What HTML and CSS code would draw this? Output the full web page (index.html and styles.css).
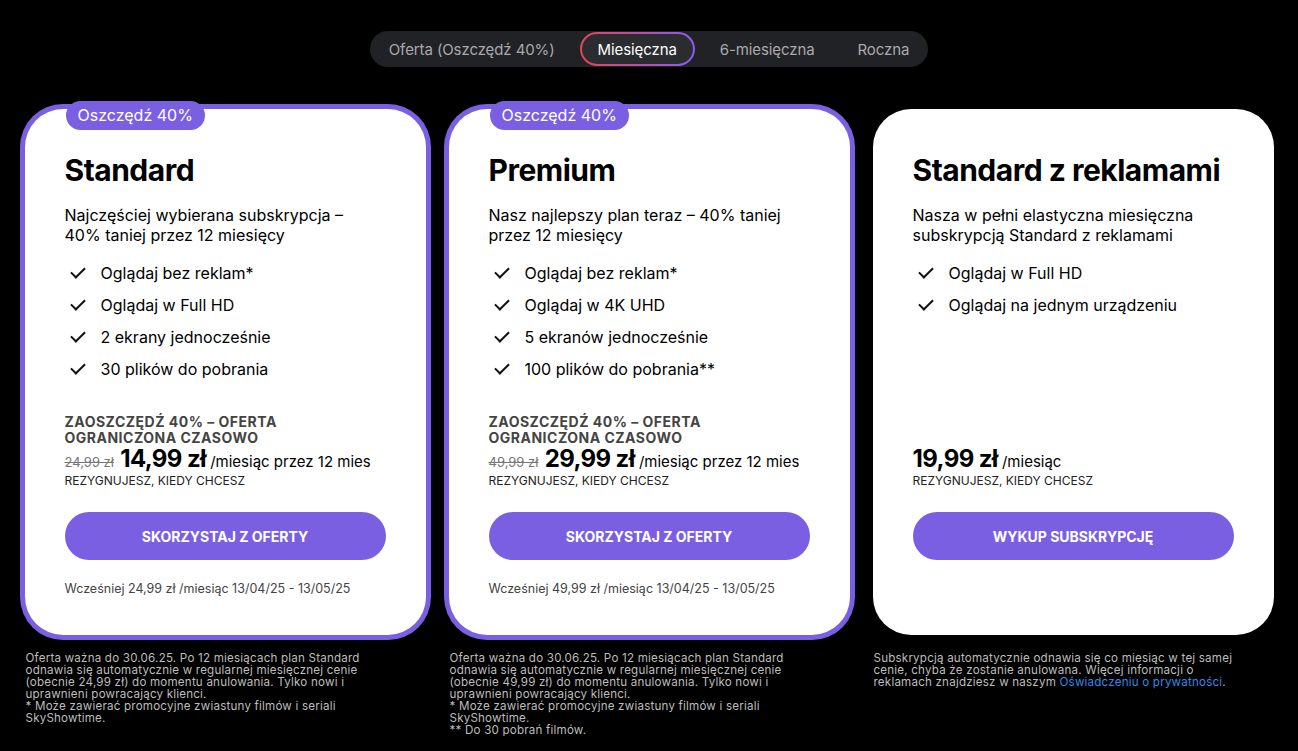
FILE: index.html
```html
<!DOCTYPE html>
<html lang="pl">

<head>
    <meta charset="UTF-8">
    <meta name="viewport" content="width=device-width, initial-scale=1.0">
    <title>Plany SkyShowtime</title>
    <link rel="stylesheet" href="styles.css">
</head>

<body>
    <nav class="tabs">
        <a class="tab">Oferta (Oszczędź 40%)</a>
        <a class="tab active">Miesięczna</a>
        <a class="tab">6-miesięczna</a>
        <a class="tab">Roczna</a>
    </nav>

    <main class="plans">
        <section class="column">
            <article class="plan plan-offer">
                <span class="badge">Oszczędź 40%</span>
                <h2>Standard</h2>
                <p class="desc">Najczęściej wybierana subskrypcja – 40% taniej przez 12 miesięcy</p>
                <ul class="features">
                    <li>Oglądaj bez reklam*</li>
                    <li>Oglądaj w Full HD</li>
                    <li>2 ekrany jednocześnie</li>
                    <li>30 plików do pobrania</li>
                </ul>
                <div class="pricing">
                    <p class="promo">ZAOSZCZĘDŹ 40% – OFERTA OGRANICZONA CZASOWO</p>
                    <p class="price"><s>24,99 zł</s> <strong>14,99 zł</strong> /miesiąc przez 12 mies</p>
                    <p class="cancel">REZYGNUJESZ, KIEDY CHCESZ</p>
                </div>
                <a class="cta">SKORZYSTAJ Z OFERTY</a>
                <p class="earlier">Wcześniej 24,99 zł /miesiąc 13/04/25 - 13/05/25</p>
            </article>
            <p class="note">Oferta ważna do 30.06.25. Po 12 miesiącach plan Standard<br>
                odnawia się automatycznie w regularnej miesięcznej cenie<br>
                (obecnie 24,99 zł) do momentu anulowania. Tylko nowi i<br>
                uprawnieni powracający klienci.<br>
                * Może zawierać promocyjne zwiastuny filmów i seriali<br>
                SkyShowtime.</p>
        </section>

        <section class="column">
            <article class="plan plan-offer">
                <span class="badge">Oszczędź 40%</span>
                <h2>Premium</h2>
                <p class="desc">Nasz najlepszy plan teraz – 40% taniej przez 12 miesięcy</p>
                <ul class="features">
                    <li>Oglądaj bez reklam*</li>
                    <li>Oglądaj w 4K UHD</li>
                    <li>5 ekranów jednocześnie</li>
                    <li>100 plików do pobrania**</li>
                </ul>
                <div class="pricing">
                    <p class="promo">ZAOSZCZĘDŹ 40% – OFERTA OGRANICZONA CZASOWO</p>
                    <p class="price"><s>49,99 zł</s> <strong>29,99 zł</strong> /miesiąc przez 12 mies</p>
                    <p class="cancel">REZYGNUJESZ, KIEDY CHCESZ</p>
                </div>
                <a class="cta">SKORZYSTAJ Z OFERTY</a>
                <p class="earlier">Wcześniej 49,99 zł /miesiąc 13/04/25 - 13/05/25</p>
            </article>
            <p class="note">Oferta ważna do 30.06.25. Po 12 miesiącach plan Standard<br>
                odnawia się automatycznie w regularnej miesięcznej cenie<br>
                (obecnie 49,99 zł) do momentu anulowania. Tylko nowi i<br>
                uprawnieni powracający klienci.<br>
                * Może zawierać promocyjne zwiastuny filmów i seriali<br>
                SkyShowtime.<br>
                ** Do 30 pobrań filmów.</p>
        </section>

        <section class="column">
            <article class="plan">
                <h2>Standard z reklamami</h2>
                <p class="desc">Nasza w pełni elastyczna miesięczna subskrypcją Standard z reklamami</p>
                <ul class="features">
                    <li>Oglądaj w Full HD</li>
                    <li>Oglądaj na jednym urządzeniu</li>
                </ul>
                <div class="pricing">
                    <p class="price"><strong>19,99 zł</strong> /miesiąc</p>
                    <p class="cancel">REZYGNUJESZ, KIEDY CHCESZ</p>
                </div>
                <a class="cta">WYKUP SUBSKRYPCJĘ</a>
                <p class="earlier">&nbsp;</p>
            </article>
            <p class="note">Subskrypcją automatycznie odnawia się co miesiąc w tej samej<br>
                cenie, chyba że zostanie anulowana. Więcej informacji o<br>
                reklamach znajdziesz w naszym <a href="#">Oświadczeniu o prywatności</a>.</p>
        </section>
    </main>
</body>

</html>
```

FILE: styles.css
```css
body {
    font-family: 'Inter', 'Noto Sans', sans-serif;
    margin: 0;
    padding: 31px 0 0;
    background-color: #000;
    color: #000;
}

p {
    margin: 0;
}

/* plan period switcher */
.tabs {
    display: flex;
    gap: 7px;
    width: max-content;
    margin: 0 auto;
    padding: 1px;
    background-color: #212225;
    border-radius: 18px;
}

.tab {
    display: flex;
    align-items: center;
    height: 34px;
    padding: 0 16px;
    box-sizing: border-box;
    color: #a9a9ad;
    font-size: 15px;
    letter-spacing: -0.1px;
    border-radius: 17px;
    border: 2px solid transparent;
}

.tab.active {
    color: #fff;
    background: linear-gradient(#2b2c30, #2b2c30) padding-box,
        linear-gradient(90deg, #e5455a, #8a5cf2) border-box;
}

/* cards */
.plans {
    display: grid;
    grid-template-columns: repeat(3, 401px);
    gap: 23px;
    justify-content: center;
    margin-top: 42px;
}

.plan {
    position: relative;
    display: flex;
    flex-direction: column;
    height: 526px;
    box-sizing: border-box;
    padding: 43px 40px 37px;
    background-color: #fff;
    border-radius: 38px;
}

.plan-offer {
    box-shadow: 0 0 0 5px #7b5fe2;
}

.badge {
    position: absolute;
    top: -8px;
    left: 41px;
    padding: 0 12px;
    height: 29px;
    line-height: 29px;
    background-color: #7b5fe2;
    color: #fff;
    font-size: 16px;
    border-radius: 15px;
}

.plan h2 {
    margin: 0;
    font-size: 30px;
    line-height: 36px;
    font-weight: 700;
    letter-spacing: -0.5px;
}

.desc {
    margin-top: 17px;
    font-size: 16px;
    line-height: 20px;
    max-width: 300px;
}

.features {
    list-style: none;
    margin: 12px 0 0;
    padding: 0;
}

.features li {
    position: relative;
    padding-left: 36px;
    font-size: 16px;
    line-height: 32px;
}

.features li::before {
    content: "";
    position: absolute;
    left: 6px;
    top: 10px;
    width: 12px;
    height: 6px;
    border-left: 2px solid #111;
    border-bottom: 2px solid #111;
    transform: rotate(-45deg);
}

.pricing {
    margin-top: auto;
}

.promo {
    font-size: 14px;
    line-height: 16px;
    font-weight: 700;
    color: #444;
    letter-spacing: 0.5px;
    max-width: 250px;
    margin-bottom: 1px;
}

.price {
    font-size: 15px;
    line-height: 24px;
}

.price s {
    color: #777;
    font-size: 13px;
    margin-right: 2px;
}

.price strong {
    font-size: 24px;
    font-weight: 700;
    letter-spacing: -0.6px;
}

.cancel {
    font-size: 12px;
    line-height: 14px;
    color: #222;
}

.cta {
    display: flex;
    justify-content: center;
    align-items: center;
    height: 48px;
    margin-top: 24px;
    background-color: #7b5fe2;
    color: #fff;
    font-size: 14px;
    font-weight: 700;
    border-radius: 24px;
}

.earlier {
    margin-top: 20px;
    font-size: 12.5px;
    line-height: 18px;
    color: #444;
}

.note {
    margin: 17px 0 0 1px;
    font-size: 11.6px;
    line-height: 12px;
    letter-spacing: 0.2px;
    color: #bdbdbd;
}

.note a {
    color: #2f8ae8;
    text-decoration: none;
}
```
